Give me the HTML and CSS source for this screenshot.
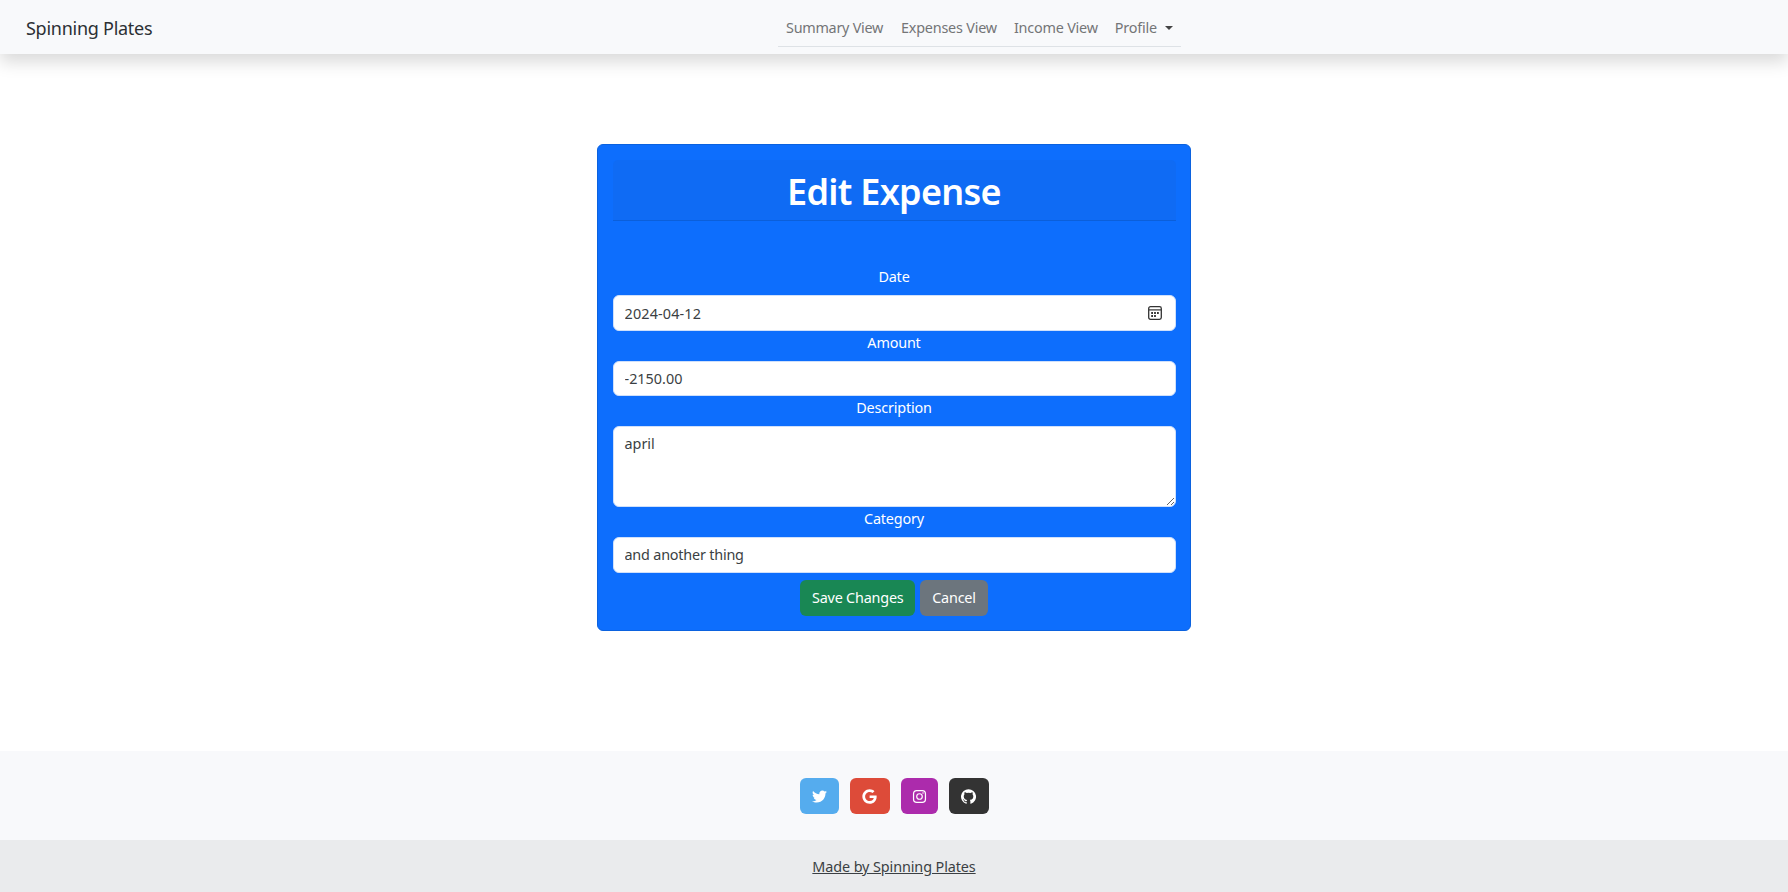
FILE: index.html
```html
<!DOCTYPE html>
<html lang="en">
<head>
<meta charset="utf-8">
<title>Edit Expense</title>
<link rel="stylesheet" href="styles.css">
</head>
<body>
<nav class="navbar">
  <a class="brand">Spinning Plates</a>
  <ul class="nav-list">
    <li class="nav-summary">Summary View</li>
    <li class="nav-expenses">Expenses View</li>
    <li class="nav-income">Income View</li>
    <li class="nav-profile">Profile<span class="caret"></span></li>
  </ul>
</nav>
<main class="content">
  <section class="card">
    <h1 class="card-header">Edit Expense</h1>
    <form class="form">
      <label class="label" for="date">Date</label>
      <div class="control date-control">
        <input class="date-input" id="date" type="text" value="2024-04-12">
        <svg class="calendar" viewBox="0 0 14 14" fill="none" stroke="#333">
          <rect x=".7" y=".7" width="12.6" height="12.6" rx="1.8" stroke-width="1.3"/>
          <path d="M1 3.9h12" stroke-width="1.2"/>
          <path d="M3.2 7h1.8M6.1 7h1.8M9 7h1.8M3.2 10h1.8M6.1 10h1.8" stroke-width="1.8"/>
        </svg>
      </div>
      <label class="label" for="amount">Amount</label>
      <input class="control" id="amount" type="text" value="-2150.00">
      <label class="label" for="description">Description</label>
      <textarea class="control area" id="description">april</textarea>
      <label class="label" for="category">Category</label>
      <input class="control category" id="category" type="text" value="and another thing">
      <div class="actions">
        <button class="btn btn-save" type="button">Save Changes</button>
        <button class="btn btn-cancel" type="button">Cancel</button>
      </div>
    </form>
  </section>
</main>
<footer class="footer">
  <div class="social">
    <a class="tile twitter"><svg class="icon" viewBox="0 0 512 512"><path d="M459.4 151.7c.3 4.5.3 9.1.3 13.6 0 138.7-105.6 298.6-298.6 298.6-59.5 0-114.7-17.2-161.1-47.1 8.4 1 16.6 1.3 25.3 1.3 49.1 0 94.2-16.6 130.3-44.8-46.1-1-84.8-31.2-98.1-72.8 6.5 1 13 1.6 19.8 1.6 9.4 0 18.8-1.3 27.6-3.6-48.1-9.7-84.1-52-84.1-103v-1.3c14 7.8 30.2 12.7 47.4 13.3-28.3-18.8-46.8-51-46.8-87.4 0-19.5 5.2-37.4 14.3-53 51.7 63.7 129.3 105.3 216.4 109.8-1.6-7.8-2.6-15.9-2.6-24 0-57.8 46.8-104.9 104.9-104.9 30.2 0 57.5 12.7 76.7 33.1 23.7-4.5 46.5-13.3 66.6-25.3-7.8 24.4-24.4 44.8-46.1 57.8 21.1-2.3 41.6-8.1 60.4-16.2-14.3 20.8-32.2 39.3-52.6 54.3z"/></svg></a>
    <a class="tile google"><svg class="icon" viewBox="0 0 488 512"><path d="M488 261.8C488 403.3 391.1 504 248 504 110.8 504 0 393.2 0 256S110.8 8 248 8c66.8 0 123 24.5 166.3 64.9l-67.5 64.9C258.5 52.6 94.3 116.6 94.3 256c0 86.5 69.1 156.6 153.7 156.6 98.2 0 135-70.4 140.8-106.9H248v-85.3h236.1c2.3 12.7 3.9 24.9 3.9 41.4z"/></svg></a>
    <a class="tile instagram"><svg class="icon" viewBox="0 0 448 512"><path fill-rule="evenodd" d="M130 32h188a130 130 0 0 1 130 130v188a130 130 0 0 1-130 130H130A130 130 0 0 1 0 350V162A130 130 0 0 1 130 32zm5 42a91 91 0 0 0-93 93v178a91 91 0 0 0 93 93h178a91 91 0 0 0 93-93V167a91 91 0 0 0-93-93zM224 141a115 115 0 1 1 0 230 115 115 0 0 1 0-230zm0 40a75 75 0 1 0 0 150 75 75 0 0 0 0-150zM344 109a27 27 0 1 1 0 54 27 27 0 0 1 0-54z"/></svg></a>
    <a class="tile github"><svg class="icon" viewBox="0 0 16 16"><path d="M8 .2a8 8 0 0 0-2.53 15.59c.4.07.55-.17.55-.38v-1.49c-2.01.37-2.53-.49-2.69-.94-.09-.23-.48-.94-.82-1.13-.28-.15-.68-.52-.01-.53.63-.01 1.08.58 1.23.82.72 1.21 1.87.87 2.33.66.07-.52.28-.87.51-1.07-1.78-.2-3.64-.89-3.64-3.95 0-.87.31-1.59.82-2.15-.08-.2-.36-1.02.08-2.12 0 0 .67-.21 2.2.82a7.42 7.42 0 0 1 4 0c1.53-1.04 2.2-.82 2.2-.82.44 1.1.16 1.92.08 2.12.51.56.82 1.27.82 2.15 0 3.07-1.87 3.75-3.65 3.95.29.25.54.73.54 1.48v2.2c0 .21.15.46.55.38A8 8 0 0 0 8 .2z"/></svg></a>
  </div>
  <div class="credit"><a class="credit-link">Made by Spinning Plates</a></div>
</footer>
</body>
</html>
```
FILE: styles.css
```css
* { box-sizing: border-box; }
body {
  margin: 0;
  height: 892px;
  display: flex;
  flex-direction: column;
  background: #fff;
  color: #212529;
  font: 14.4px/23px "Noto Sans", "Open Sans", sans-serif;
  overflow: hidden;
}
.navbar {
  height: 54px;
  flex: none;
  display: grid;
  grid-template-columns: 778px 403px;
  background: #f8f9fb;
  box-shadow: 0 8px 16px rgba(0, 0, 0, .15);
}
.brand { padding: 15px 0 0 26px; font-size: 18px; line-height: 26px; letter-spacing: -.26px; color: #2c3034; }
.nav-list {
  height: 47px;
  margin: 0;
  padding: 16px 8px 0;
  display: flex;
  list-style: none;
  border-bottom: 1px solid #dee2e6;
  color: #747577;
  white-space: nowrap;
}
.nav-summary { width: 115px; }
.nav-expenses { width: 113px; }
.nav-income { width: 101px; }
.nav-list li { letter-spacing: -.2px; }
.nav-list .nav-summary { letter-spacing: -.27px; }
.caret {
  display: inline-block;
  margin-left: 8px;
  vertical-align: 3px;
  border: 4px solid transparent;
  border-top-color: #444;
  border-bottom: 0;
}
.content { flex: 1; padding-top: 90px; }
.card {
  width: 594px;
  height: 487px;
  margin: 0 auto;
  padding: 15px 14.5px;
  background: #0d6efd;
  border: 1px solid #0b62df;
  border-radius: 6px;
  color: #fff;
}
.card-header {
  height: 61px;
  margin: 0;
  padding-top: 8px;
  background: #0f6bf4;
  border-bottom: 1px solid #0b5fda;
  border-radius: 5px 5px 0 0;
  font-size: 36px;
  line-height: 48px;
  font-weight: 600;
  letter-spacing: -.72px;
  text-align: center;
}
.form { display: flex; flex-direction: column; padding-top: 45px; }
.label { height: 29.8px; text-align: center; letter-spacing: -.18px; }
.form > .label:first-child { height: 29.2px; line-height: 22px; }
.control {
  width: 100%;
  height: 35.7px;
  padding: 0 11px;
  background: #fff;
  border: 1px solid #cfe0fb;
  border-radius: 6px;
  color: #3b3f43;
  font: inherit;
  letter-spacing: 0;
  outline: 0;
}
.date-control { display: flex; align-items: center; padding-right: 13px; }
.date-input { flex: 1; padding: 0; border: 0; outline: 0; background: none; color: inherit; font: inherit; letter-spacing: .15px; }
.calendar { width: 14px; height: 14px; }
.area { height: 81px; padding-top: 5px; resize: vertical; display: block; }
.category { letter-spacing: -.2px; }
.actions { display: flex; justify-content: center; gap: 5px; padding-top: 7px; }
.btn { height: 36px; padding: 0; border: 0; border-radius: 6px; color: #fff; font: inherit; letter-spacing: -.2px; }
.btn-save { width: 115px; background: #198754; }
.btn-cancel { width: 67.5px; background: #6c757d; }
.footer { height: 141px; flex: none; background: #f8f9fb; }
.social { height: 89px; padding-top: 27px; display: flex; justify-content: center; gap: 11px; }
.tile { width: 39.5px; height: 36px; display: flex; align-items: center; justify-content: center; border-radius: 6px; }
.icon { width: 15px; height: 15px; fill: #fff; }
.twitter { background: #55acee; }
.google { background: #dd4b39; }
.instagram { width: 37.5px; background: #ac2bac; }
.github { background: #333; }
.credit { height: 52px; padding-top: 15px; background: #eaebed; text-align: center; }
.credit-link { text-decoration: underline; color: #3b3f43; letter-spacing: -.1px; }
```
